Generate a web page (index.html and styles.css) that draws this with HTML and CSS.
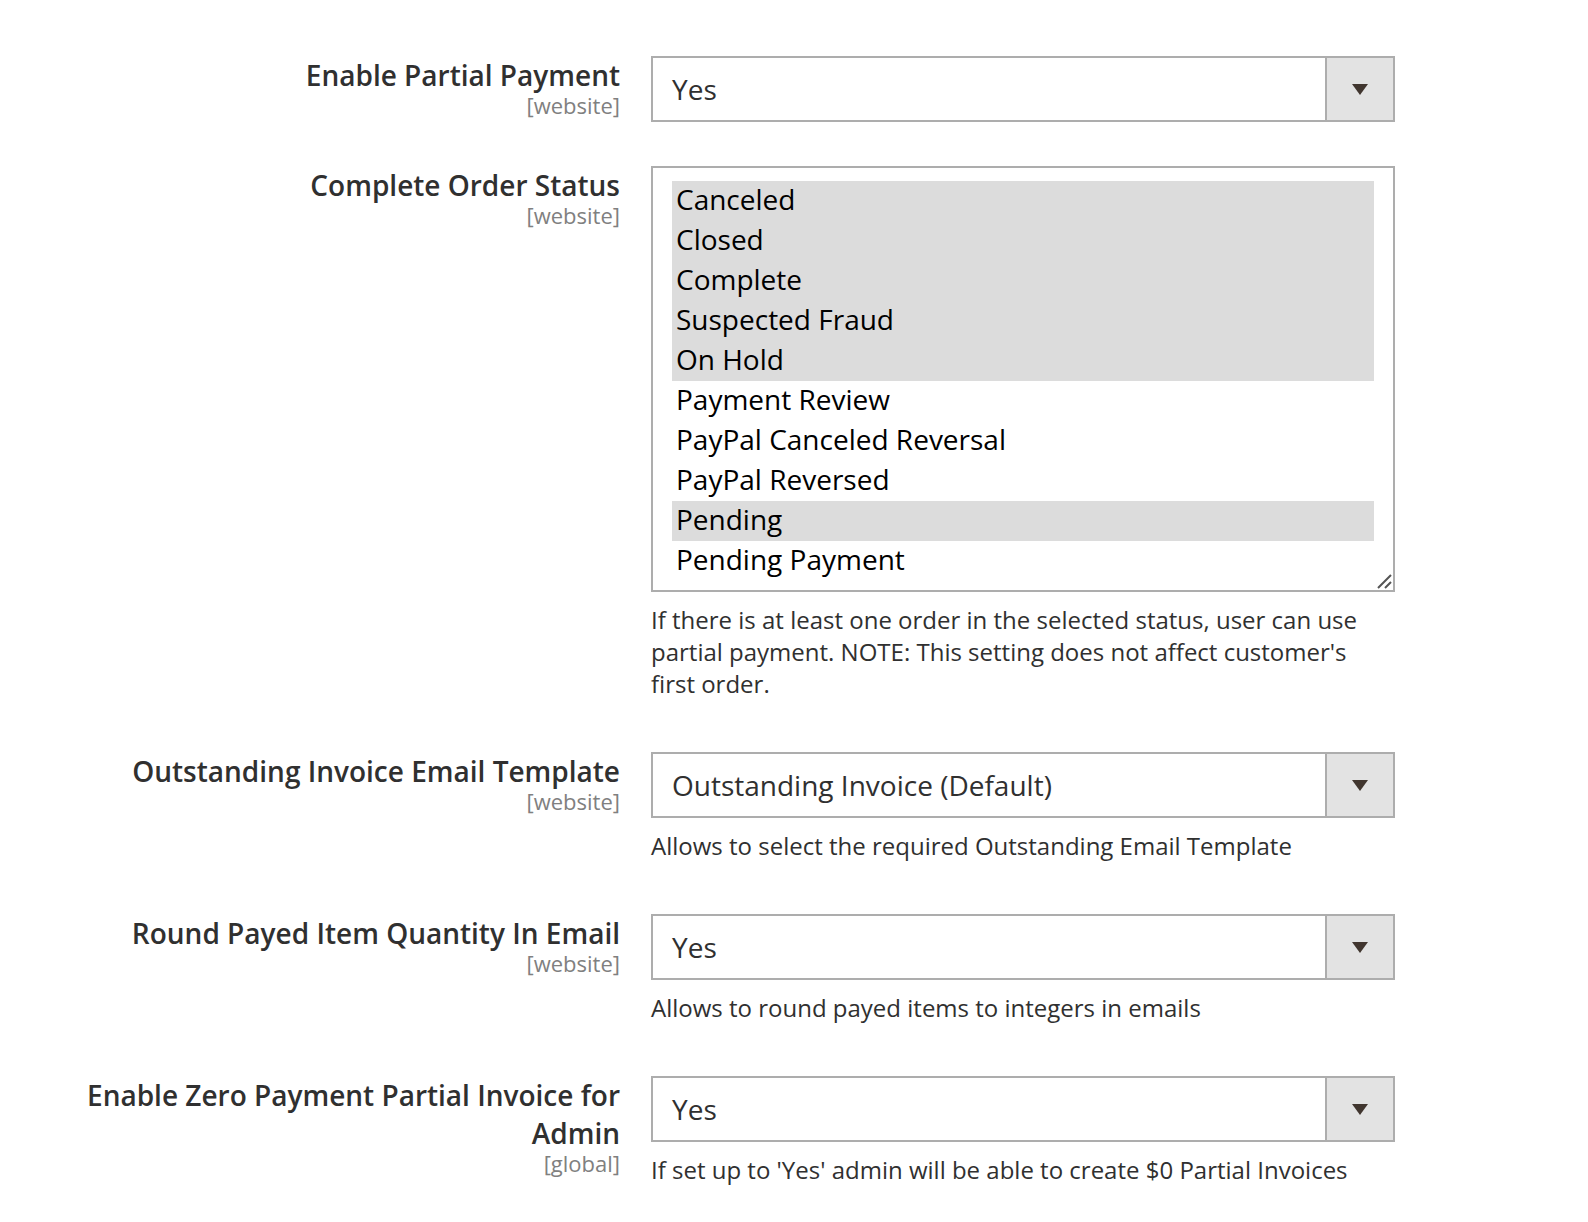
FILE: index.html
```html
<!DOCTYPE html>
<html lang="en">
<head>
<meta charset="utf-8">
<title>Partial Payment Settings</title>
<link rel="stylesheet" href="styles.css">
</head>
<body>
<div class="form">
  <div class="row">
    <div class="label">Enable Partial Payment<span class="scope">[website]</span></div>
    <div class="control">
      <div class="select"><span class="value">Yes</span><span class="arrow"></span></div>
    </div>
  </div>

  <div class="row">
    <div class="label">Complete Order Status<span class="scope">[website]</span></div>
    <div class="control">
      <div class="multiselect">
        <div class="opt sel">Canceled</div>
        <div class="opt sel">Closed</div>
        <div class="opt sel">Complete</div>
        <div class="opt sel">Suspected Fraud</div>
        <div class="opt sel">On Hold</div>
        <div class="opt">Payment Review</div>
        <div class="opt">PayPal Canceled Reversal</div>
        <div class="opt">PayPal Reversed</div>
        <div class="opt sel">Pending</div>
        <div class="opt">Pending Payment</div>
        <svg class="grip" width="16" height="16" viewBox="0 0 16 16"><path d="M2 15 L15 2 M9 15 L15 9" stroke="#555" stroke-width="2" fill="none"/></svg>
      </div>
      <div class="note">If there is at least one order in the selected status, user can use partial payment. NOTE: This setting does not affect customer's first order.</div>
    </div>
  </div>

  <div class="row">
    <div class="label">Outstanding Invoice Email Template<span class="scope">[website]</span></div>
    <div class="control">
      <div class="select"><span class="value">Outstanding Invoice (Default)</span><span class="arrow"></span></div>
      <div class="note">Allows to select the required Outstanding Email Template</div>
    </div>
  </div>

  <div class="row">
    <div class="label">Round Payed Item Quantity In Email<span class="scope">[website]</span></div>
    <div class="control">
      <div class="select"><span class="value">Yes</span><span class="arrow"></span></div>
      <div class="note">Allows to round payed items to integers in emails</div>
    </div>
  </div>

  <div class="row">
    <div class="label">Enable Zero Payment Partial Invoice for Admin<span class="scope">[global]</span></div>
    <div class="control">
      <div class="select"><span class="value">Yes</span><span class="arrow"></span></div>
      <div class="note">If set up to 'Yes' admin will be able to create $0 Partial Invoices</div>
    </div>
  </div>
</div>
</body>
</html>
```

FILE: styles.css
```css
html, body {
  margin: 0;
  padding: 0;
  background: #ffffff;
}

body {
  font-family: "Open Sans", "Liberation Sans", sans-serif;
  color: #303030;
}

.form {
  padding: 56px 0 0 60px;
}

.row {
  display: grid;
  grid-template-columns: 560px 744px;
  column-gap: 31px;
  margin-bottom: 44px;
}

.label {
  text-align: right;
  font-size: 28px;
  font-weight: 600;
  line-height: 38px;
  color: #303030;
}

.scope {
  display: block;
  font-size: 22px;
  font-weight: 400;
  line-height: 22px;
  color: #808080;
}

.control {
  display: flex;
  flex-direction: column;
}

.select {
  height: 66px;
  box-sizing: border-box;
  border: 2px solid #adadad;
  display: flex;
  align-items: stretch;
  background: #fff;
}

.value {
  flex: 1;
  display: flex;
  align-items: center;
  padding-left: 19px;
  font-size: 28px;
  color: #303030;
}

.arrow {
  width: 66px;
  border-left: 2px solid #adadad;
  background: #e3e3e3;
  display: flex;
  align-items: center;
  justify-content: center;
}

.arrow::after {
  content: "";
  width: 0;
  height: 0;
  border-left: 8px solid transparent;
  border-right: 8px solid transparent;
  border-top: 11px solid #41362f;
}

.multiselect {
  position: relative;
  height: 426px;
  box-sizing: border-box;
  border: 2px solid #adadad;
  padding: 13px 19px 0;
  overflow: hidden;
  background: #fff;
}

.opt {
  height: 40px;
  box-sizing: border-box;
  line-height: 37px;
  padding: 0 4px 3px;
  font-size: 28px;
  color: #000;
  white-space: nowrap;
}

.opt.sel {
  background: #dcdcdc;
}

.grip {
  position: absolute;
  right: 1px;
  bottom: 1px;
}

.note {
  margin-top: 12px;
  padding-bottom: 8px;
  font-size: 24px;
  line-height: 32px;
  color: #303030;
}
```
